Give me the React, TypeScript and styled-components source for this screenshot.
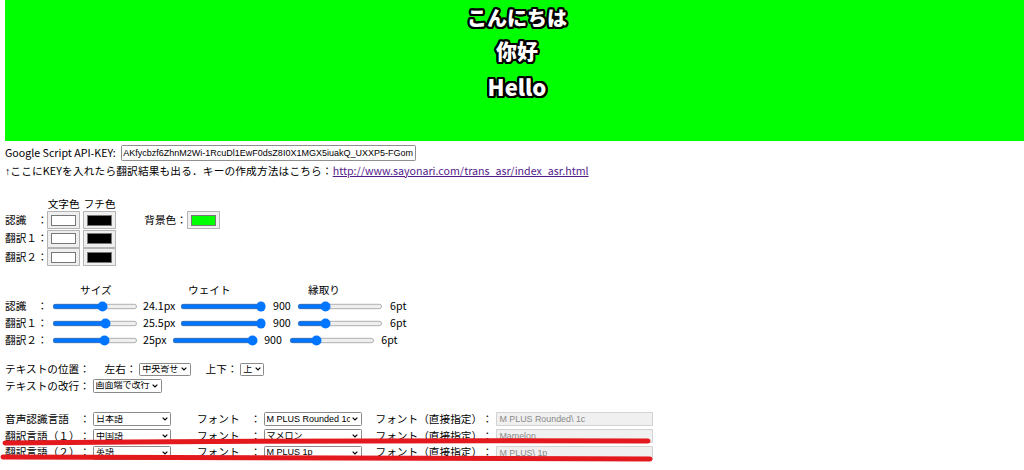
import React from 'react'
import styled, { createGlobalStyle } from 'styled-components'

const Global = createGlobalStyle`
html, body {
  margin:0;
  padding:0;
  background:#fff;
}
body {
  font-family:"Noto Sans CJK JP", "Noto Sans", sans-serif;
  color:#000;
  overflow:hidden;
  text-spacing-trim:space-all;
}
`

// black outline round the preview text
const outline = (() => {
  const out: string[] = []
  for (let i = 0; i < 16; i++) {
    const a = (i / 16) * Math.PI * 2
    out.push(`${(Math.cos(a) * 2.2).toFixed(2)}px ${(Math.sin(a) * 2.2).toFixed(2)}px 0 #000`)
  }
  return out.join(',')
})()

const Page = styled.div`
position:relative;
width:1024px;
height:470px;
overflow:hidden;
`

const Preview = styled.div`
margin-left:5px;
width:1024px;
height:141px;
box-sizing:border-box;
padding-top:2px;
background:#00ff00;
display:flex;
flex-direction:column;
align-items:center;
color:#fff;
font-weight:900;
font-family:"Noto Sans CJK JP", sans-serif;
text-shadow:${outline};
`

const Caption = styled.div<{ $size: number; $h: number }>`
font-size:${p => p.$size}px;
line-height:${p => p.$h}px;
height:${p => p.$h}px;
`

// everything below the preview is drawn at 2/3 size, as in the reference
const Controls = styled.div`
zoom:0.6667;
margin-left:7.5px;
font-size:16px;
line-height:1.2;
white-space:nowrap;
`

const Line = styled.div<{ $h: number; $top?: number }>`
display:flex;
align-items:center;
height:${p => p.$h}px;
margin-top:${p => p.$top || 0}px;
`

const ApiLabel = styled.span`
width:174px;
`

const ApiInput = styled.input`
box-sizing:border-box;
width:442px;
height:24px;
margin:0;
padding:1px 2px;
border:1px solid #8f8f8f;
border-radius:2px;
font-family:"Liberation Sans", Arial, sans-serif;
font-size:13.5px;
color:#000;
`

const Arrow = styled.span`
font-family:"Liberation Sans", Arial, sans-serif;
`

const Hint = styled.span`
letter-spacing:0.25px;
`

const Link = styled.a`
color:#551a8b;
text-decoration:underline;
`

const ColorGrid = styled.div`
margin-top:21px;
display:grid;
grid-template-columns:59px 50px 50px auto;
grid-template-rows:24.75px;
grid-auto-rows:27px;
column-gap:4px;
row-gap:1px;
align-items:center;
`

const Head = styled.span`
text-align:center;
align-self:end;
`

const RowLabel = styled.span<{ $w?: number }>`
width:${p => (p.$w ? p.$w + 'px' : 'auto')};
`

const ColorInput = styled.input`
box-sizing:border-box;
width:50px;
height:27px;
margin:0;
padding:4px 5px;
background:#efefef;
border:1px solid #b4b4b4;
border-radius:1px;
&::-webkit-color-swatch-wrapper {
  padding:0;
}
&::-webkit-color-swatch {
  border:1px solid #777;
  border-radius:0;
}
`

const BgCell = styled.div`
display:flex;
align-items:center;
margin-left:38px;
`

const SliderHead = styled.div`
margin-top:24.75px;
display:grid;
grid-template-columns:112.5px 162px 180px auto;
height:22.5px;
align-items:center;
`

const Range = styled.input`
width:129px;
margin:0 2px;
`

const Value = styled.span<{ $pad?: number }>`
margin:0 ${p => p.$pad || 5.5}px;
`

const SelectBox = styled.span<{ $w: number; $h: number }>`
position:relative;
display:inline-flex;
width:${p => p.$w}px;
height:${p => p.$h}px;
margin-left:4px;
select {
  appearance:none;
  box-sizing:border-box;
  width:100%;
  height:100%;
  margin:0;
  padding:0 16px 0 3px;
  font-family:"Liberation Sans", "Noto Sans CJK JP", sans-serif;
  font-size:13.5px;
  line-height:1;
  color:#000;
  background:#fff;
  border:1px solid #8a8a8a;
  border-radius:2px;
}
svg {
  position:absolute;
  right:5px;
  top:50%;
  margin-top:-3px;
  pointer-events:none;
}
`

const Gap = styled.span<{ $w: number }>`
margin-left:${p => p.$w}px;
`

const Fixed = styled.input`
box-sizing:border-box;
width:235.5px;
height:21px;
margin:0 0 0 4.5px;
padding:1px 4px;
background:#f0f0f0;
border:1px solid #d3d3d3;
border-radius:1px;
font-family:"Liberation Sans", Arial, sans-serif;
font-size:13.33px;
color:#8a8a8a;
`

const Marks = styled.svg`
position:absolute;
left:0;
top:0;
pointer-events:none;
`

type DropProps = { w: number; h: number; value: string; options: string[] }

const Drop = ({ w, h, value, options }: DropProps) => (
  <SelectBox $w={w} $h={h}>
    <select defaultValue={value}>
      {options.map(o => <option key={o}>{o}</option>)}
    </select>
    <svg width='9' height='6' viewBox='0 0 9 6'>
      <polyline points='1,1 4.5,4.5 8,1' fill='none' stroke='#000' strokeWidth='1.8' />
    </svg>
  </SelectBox>
)

const colorRows = [
  { label: '認識　：', bg: true },
  { label: '翻訳１：', bg: false },
  { label: '翻訳２：', bg: false },
]

const sliderRows = [
  { label: '認識　：', size: 24.1, sizeText: '24.1px' },
  { label: '翻訳１：', size: 25.5, sizeText: '25.5px' },
  { label: '翻訳２：', size: 25, sizeText: '25px' },
]

const langRows = [
  { label: '音声認識言語　：', lang: '日本語', font: 'M PLUS Rounded 1c', direct: 'M PLUS Rounded\\ 1c' },
  { label: '翻訳言語（１）：', lang: '中国語', font: 'マメロン', direct: 'Mamelon' },
  { label: '翻訳言語（２）：', lang: '英語', font: 'M PLUS 1p', direct: 'M PLUS\\ 1p' },
]

const App = () => {
  return (
    <Page>
      <Global />
      <Preview>
        <Caption $size={20} $h={32}>こんにちは</Caption>
        <Caption $size={21} $h={32}>你好</Caption>
        <Caption $size={22} $h={40}>Hello</Caption>
      </Preview>
      <Controls>
        <Line $h={27} $top={4.5}>
          <ApiLabel>Google Script API-KEY:</ApiLabel>
          <ApiInput defaultValue='AKfycbzf6ZhnM2Wi-1RcuDl1EwF0dsZ8I0X1MGX5iuakQ_UXXP5-FGom' />
        </Line>
        <Line $h={27}>
          <Arrow>↑</Arrow>
          <Hint>ここにKEYを入れたら翻訳結果も出る．キーの作成方法はこちら：</Hint>
          <Link href='#'>http://www.sayonari.com/trans_asr/index_asr.html</Link>
        </Line>

        <ColorGrid>
          <span />
          <Head>文字色</Head>
          <Head>フチ色</Head>
          <span />
          {colorRows.map(r => (
            <React.Fragment key={r.label}>
              <RowLabel>{r.label}</RowLabel>
              <ColorInput type='color' defaultValue='#ffffff' />
              <ColorInput type='color' defaultValue='#000000' />
              {r.bg ? (
                <BgCell>
                  <span>背景色：</span>
                  <ColorInput type='color' defaultValue='#00ff00' />
                </BgCell>
              ) : <span />}
            </React.Fragment>
          ))}
        </ColorGrid>

        <SliderHead>
          <span />
          <span>サイズ</span>
          <span>ウェイト</span>
          <span>縁取り</span>
        </SliderHead>
        {sliderRows.map(r => (
          <Line $h={25.5} key={r.label}>
            <RowLabel $w={68.5}>{r.label}</RowLabel>
            <Range type='range' min={0} max={40} step={0.1} defaultValue={r.size} />
            <Value>{r.sizeText}</Value>
            <Range type='range' min={100} max={900} step={100} defaultValue={900} />
            <Value $pad={8}>900</Value>
            <Range type='range' min={0} max={20} step={1} defaultValue={6} />
            <Value $pad={8}>6pt</Value>
          </Line>
        ))}

        <Line $h={24.75} $top={18.4}>
          <span>テキストの位置：</span>
          <Gap $w={22}>左右：</Gap>
          <Drop w={77} h={20} value='中央寄せ' options={['左寄せ', '中央寄せ', '右寄せ']} />
          <Gap $w={22.5}>上下：</Gap>
          <Drop w={36} h={20} value='上' options={['上', '下']} />
        </Line>
        <Line $h={24.75}>
          <span>テキストの改行：</span>
          <Drop w={103.5} h={20} value='画面端で改行' options={['画面端で改行', '改行しない']} />
        </Line>

        {langRows.map((r, i) => (
          <Line $h={25.1} $top={i === 0 ? 25.3 : 0} key={r.label}>
            <span>{r.label}</span>
            <Drop w={117} h={21} value={r.lang} options={[r.lang]} />
            <Gap $w={39}>フォント　：</Gap>
            <Drop w={147} h={21} value={r.font} options={[r.font]} />
            <Gap $w={21}>フォント（直接指定）：</Gap>
            <Fixed value={r.direct} readOnly disabled />
          </Line>
        ))}
      </Controls>

      <Marks width='1024' height='470' viewBox='0 0 1024 470'>
        <path d='M5 443 Q 330 440 648 441' stroke='#e3191e' strokeWidth='5' strokeLinecap='round' fill='none' />
        <path d='M3 457 Q 330 457 650 459' stroke='#e3191e' strokeWidth='5' strokeLinecap='round' fill='none' />
      </Marks>
    </Page>
  )
}

export default App
